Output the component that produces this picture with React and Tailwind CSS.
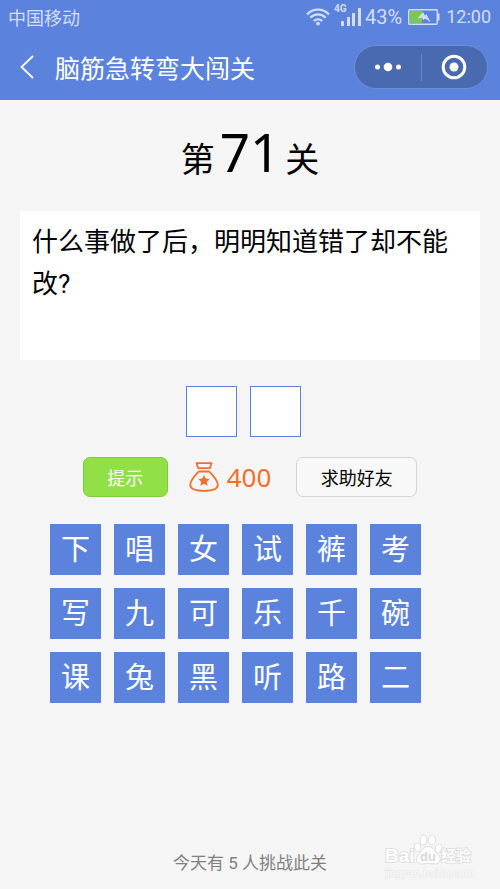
const tiles = ['下', '唱', '女', '试', '裤', '考', '写', '九', '可', '乐', '千', '碗', '课', '兔', '黑', '听', '路', '二'];

function WifiIcon() {
  return (
    <svg className="h-[18px] w-6" viewBox="0 0 24 18" fill="none" stroke="currentColor" strokeWidth="2.2">
      <path d="M1 6.4C7.2.1 16.8.1 23 6.4" />
      <path d="M4.3 9.8c4.4-4.5 11-4.5 15.4 0" />
      <path d="M7.8 13.1c2.4-2.5 6-2.5 8.4 0" />
      <circle cx="12" cy="15.6" r="1.9" fill="currentColor" stroke="none" />
    </svg>
  );
}

function SignalIcon() {
  return (
    <svg className="h-[18px] w-5" viewBox="0 0 20 18" fill="currentColor">
      <rect x="0" y="13" width="3" height="5" rx="0.5" />
      <rect x="6" y="9" width="3" height="9" rx="0.5" />
      <rect x="11" y="5" width="3" height="13" rx="0.5" />
      <rect x="17" y="0" width="3" height="18" rx="0.5" />
    </svg>
  );
}

function BatteryIcon() {
  return (
    <svg className="h-4 w-8" viewBox="0 0 32 16">
      <rect x="0.7" y="0.7" width="28.6" height="14.6" rx="1" fill="none" stroke="#d3def6" strokeWidth="1.4" />
      <path d="M30 4.5h1.5v7H30z" fill="#d3def6" />
      <rect x="2" y="2" width="12" height="12" fill="#79c65a" />
      <path d="M9.500 9.500L15 3l2 3.500 1.500-1L22.500 13l-5.500-3.500-1.500 1.500-2-2.500z" fill="#d3def6" />
    </svg>
  );
}

function MoneyBag() {
  return (
    <svg className="h-[30px] w-[30px]" viewBox="0 0 30 30" fill="none" stroke="#f1702c" strokeWidth="1.8" strokeLinejoin="round">
      <path d="M7.500 1.200h15l-1.700 5H9.200z" />
      <path d="M9.7 9.5h10.6c2.7 3.1 8.500 8.5 8.500 13.200 0 4.300-4 6.100-13.800 6.100S1.200 27 1.200 22.700c0-4.700 5.800-10.100 8.500-13.200z" />
      <path d="M15 12.900l1.700 3.600 4 .5-2.900 2.700.8 4-3.600-2-3.600 2 .8-4-2.900-2.700 4-.5z" fill="#f1702c" stroke="none" />
    </svg>
  );
}

function Watermark() {
  return (
    <svg className="h-[52px] w-[96px]" viewBox="0 0 96 52" role="img" aria-label="Baidu 经验">
      <g fill="#fcfcfc" stroke="#dcdcdc" strokeWidth="1.6" paintOrder="stroke" fontFamily="'Liberation Sans', 'Noto Sans CJK SC', sans-serif" fontWeight="700">
        <text x="3" y="33" fontSize="19">Bai</text>
        <text x="59" y="32" fontSize="15">经验</text>
      </g>
      <g fill="#fcfcfc" stroke="#dedede" strokeWidth="1">
        <ellipse cx="35.500" cy="18.500" rx="3.200" ry="4.400" transform="rotate(-15 35.500 18.500)" />
        <ellipse cx="41.500" cy="11" rx="3.500" ry="5" />
        <ellipse cx="50" cy="11" rx="3.500" ry="5" />
        <ellipse cx="56.500" cy="19.500" rx="3.200" ry="4.400" transform="rotate(15 56.500 19.500)" />
        <path d="M46 17.500c-5 0-6 5-9 7.500-4 3-3.500 9.500 2 10 3 .3 4-.5 7-.5s5 .8 8 .5c5-.5 5.500-7 1.500-10-3-2.500-4.500-7.500-9.500-7.500z" />
      </g>
      <text x="38" y="32" fontSize="13" fontWeight="700" fontFamily="'Liberation Sans', sans-serif" fill="#d8d8d8">du</text>
      <text x="3" y="48" fontSize="11" fontFamily="'Liberation Sans', sans-serif" fill="#fafafa" stroke="#e6e6e6" strokeWidth="1" paintOrder="stroke">jingyan.baidu.com</text>
    </svg>
  );
}

export default function App() {
  return (
    <div className="flex min-h-screen flex-col bg-[#f5f5f5] font-['Noto_Sans_CJK_SC',sans-serif] text-black">
      <header className="bg-[#5b83de] text-white">
        <div className="flex h-[34px] items-center justify-between pr-[9px] pl-2 text-[#d3def6]">
          <span className="text-[18px] leading-6">中国移动</span>
          <div className="flex items-center font-[Roboto,sans-serif] text-[20px] leading-6">
            <WifiIcon />
            <div className="relative ml-[11px] flex">
              <SignalIcon />
              <span className="absolute -top-1 -left-[7px] text-[10px] leading-[10px] font-bold">4G</span>
            </div>
            <span className="ml-1">43%</span>
            <span className="ml-1.5"><BatteryIcon /></span>
            <span className="ml-1.5 text-[18px]">12:00</span>
          </div>
        </div>
        <div className="flex h-[66px] items-center pr-3 pl-5">
          <button type="button" aria-label="返回">
            <svg className="h-6 w-[14px]" viewBox="0 0 14 24" fill="none" stroke="white" strokeWidth="1.8">
              <path d="M13 1L1.500 12 13 23" />
            </svg>
          </button>
          <h1 className="ml-[21px] flex-1 text-[25px] leading-8">脑筋急转弯大闯关</h1>
          <div className="flex h-11 w-[134px] items-center rounded-full border border-[#6f8fd3] bg-[#4969b1]">
            <button type="button" aria-label="更多" className="flex h-full flex-1 items-center justify-center">
              <svg className="h-[10px] w-[26px]" viewBox="0 0 26 10" fill="white">
                <circle cx="2.500" cy="5" r="2.500" />
                <circle cx="13" cy="5" r="4.300" />
                <circle cx="23.500" cy="5" r="2.500" />
              </svg>
            </button>
            <span className="h-[27px] w-px bg-[#6b86c4]" />
            <button type="button" aria-label="关闭" className="flex h-full flex-1 items-center justify-center">
              <svg className="h-[26px] w-[26px]" viewBox="0 0 26 26">
                <circle cx="13" cy="13" r="10.800" fill="none" stroke="white" strokeWidth="3" />
                <circle cx="13" cy="13" r="4.500" fill="white" />
              </svg>
            </button>
          </div>
        </div>
      </header>

      <main className="flex flex-1 flex-col">
        <h2 className="flex h-[111px] items-baseline justify-center gap-[5px] pt-4 text-[34px] leading-[72px]">
          <span>第</span>
          <span className="font-['Noto_Sans',sans-serif] text-[53px]">71</span>
          <span>关</span>
        </h2>
        <p className="mx-5 min-h-[149px] bg-white px-3 py-[10px] font-[Roboto,'Noto_Sans_CJK_SC',sans-serif] text-[26px] leading-[42px]">
          什么事做了后，明明知道错了却不能改?
        </p>
        <div className="mt-[26px] flex justify-center gap-[13px] pr-[13px]">
          <input aria-label="答案第一字" readOnly className="h-[51px] w-[51px] border border-[#5b83de] bg-white text-center text-[30px]" />
          <input aria-label="答案第二字" readOnly className="h-[51px] w-[51px] border border-[#5b83de] bg-white text-center text-[30px]" />
        </div>
        <div className="mt-5 flex items-center justify-center">
          <button type="button" className="h-10 w-[85px] rounded-[7px] border border-[#7ecb3b] bg-[#91e047] text-[18px] leading-6 text-white">提示</button>
          <span className="ml-[21px] flex"><MoneyBag /></span>
          <span className="ml-2 font-['Noto_Sans',sans-serif] text-[26px] leading-8 text-[#f1702c]">400</span>
          <button type="button" className="ml-[25px] h-10 w-[121px] rounded-[7px] border border-[#d4d4d4] bg-[#f8f8f8] text-[18px] leading-6">求助好友</button>
        </div>
        <div className="mx-[50px] mt-[27px] flex flex-wrap gap-[13px]">
          {tiles.map((t) => (
            <button key={t} type="button" className="h-[51px] w-[51px] bg-[#5b83de] pb-[5px] text-[29px] leading-[46px] text-white">{t}</button>
          ))}
        </div>
      </main>

      <footer className="relative pb-[14px] text-center font-[Roboto,'Noto_Sans_CJK_SC',sans-serif] text-[17px] leading-6 text-[#808080]">
        今天有 5 人挑战此关
        <div className="absolute right-[22px] bottom-2"><Watermark /></div>
      </footer>
    </div>
  );
}
